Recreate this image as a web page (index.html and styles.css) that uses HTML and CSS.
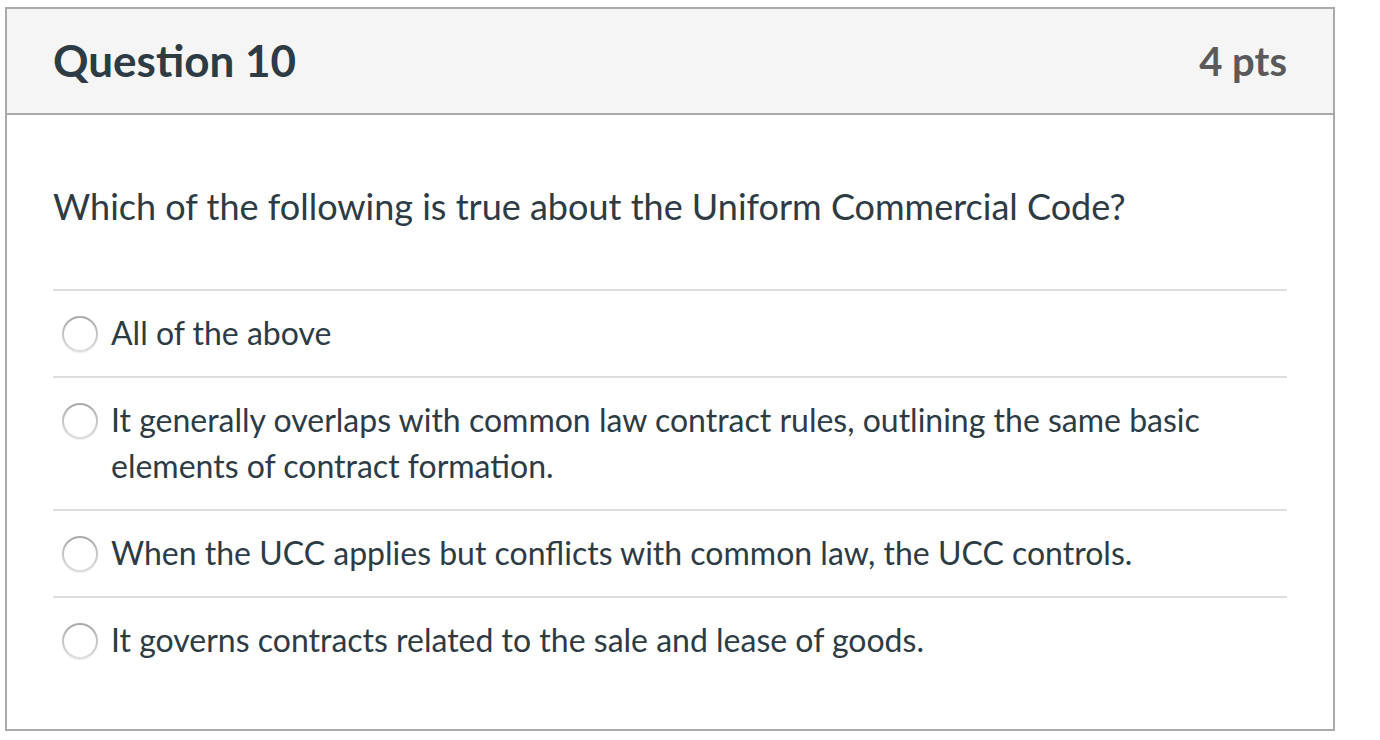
FILE: index.html
```html
<!DOCTYPE html>
<html>
<head>
<meta charset="utf-8">
<link rel="stylesheet" href="styles.css">
</head>
<body>
<div class="question">
  <div class="header">
    <h2 class="title">Question 10</h2>
    <span class="pts">4 pts</span>
  </div>
  <div class="content">
    <p class="qtext">Which of the following is true about the Uniform Commercial Code?</p>
    <div class="answers">
      <div class="answer"><span class="radio"></span><span class="label">All of the above</span></div>
      <div class="answer"><span class="radio"></span><span class="label">It generally overlaps with common law contract rules, outlining the same basic elements of contract formation.</span></div>
      <div class="answer"><span class="radio"></span><span class="label">When the UCC applies but conflicts with common law, the UCC controls.</span></div>
      <div class="answer"><span class="radio"></span><span class="label">It governs contracts related to the sale and lease of goods.</span></div>
    </div>
  </div>
</div>
</body>
</html>
```
FILE: styles.css
```css
* { box-sizing: border-box; }
html, body { margin: 0; padding: 0; background: #fff; }
body {
  font-family: Lato, "Open Sans", sans-serif;
  color: #2d3b45;
  padding: 7px 0 0 5px;
}
.question {
  width: 1330px;
  height: 724px;
  border: 2px solid #aaaaaa;
  display: flex;
  flex-direction: column;
}
.header {
  height: 106px;
  background: #f5f5f5;
  border-bottom: 2px solid #aaaaaa;
  display: flex;
  align-items: center;
  justify-content: space-between;
  padding: 0 46px 0 46px;
}
.title {
  margin: 0;
  font-size: 44px;
  font-weight: 700;
  color: #2d3b45;
  line-height: 1;
  position: relative;
  top: -1px;
}
.pts {
  font-size: 40px;
  font-weight: 700;
  color: #5a5a5a;
  line-height: 1;
  position: relative;
  top: 0px;
}
.content {
  padding: 0 46px;
}
.qtext {
  margin: 0;
  padding-top: 68px;
  height: 174px;
  font-size: 36px;
  line-height: 46px;
  color: #2d3b45;
}
.answer {
  border-top: 2px solid #dddddd;
  display: flex;
  align-items: flex-start;
  padding: 19px 0 20px 0;
}
.radio {
  flex: none;
  width: 36px;
  height: 36px;
  border-radius: 50%;
  margin: 6px 13px 0 9px;
  border: 2px solid transparent;
  background: linear-gradient(#ffffff, #ffffff) padding-box, linear-gradient(#a9a9a9, #dedede) border-box;
  box-shadow: 0 1px 1px rgba(0,0,0,0.08);
}
.label {
  font-size: 32px;
  line-height: 46px;
  color: #2d3b45;
}
```
